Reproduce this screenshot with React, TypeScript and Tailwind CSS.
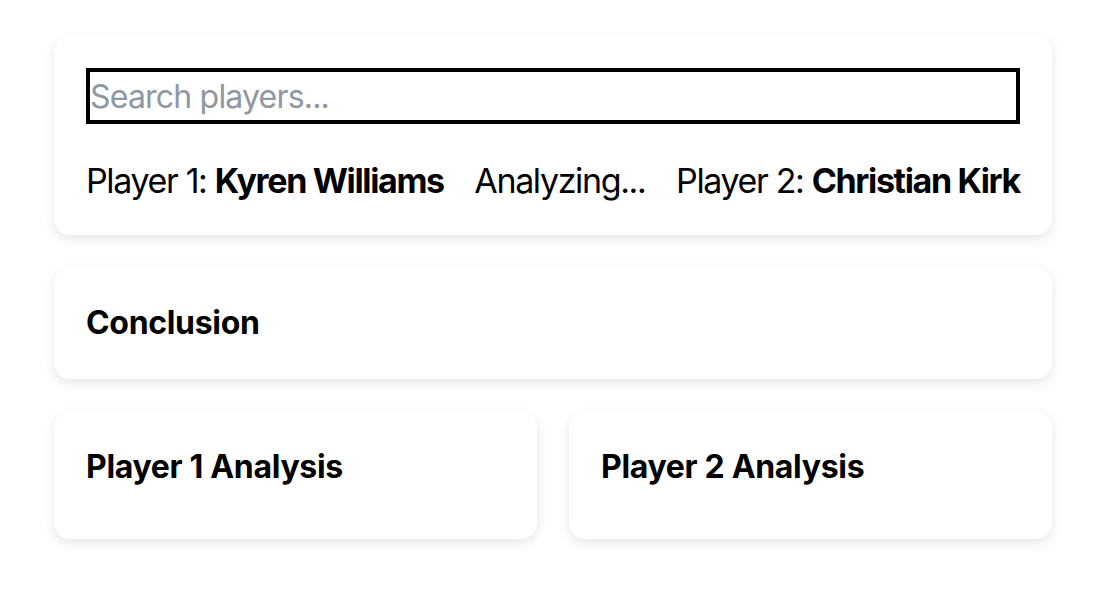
import React from 'react';

const App: React.FC = () => {
  return (
    <div className="min-h-screen bg-white pl-[54px] pr-[60px] pt-[36px] font-['Inter',sans-serif] text-black">
      <div className="flex flex-col gap-[32px]">
        <div className="rounded-[16px] bg-white px-[32px] pt-[32px] pb-[26px] shadow-[0_4px_12px_rgba(0,0,0,0.10)]">
          <input
            type="text"
            placeholder="Search players..."
            className="block h-[56px] w-full border-[4px] border-black px-0 text-[32px] leading-[48px] tracking-[-0.025em] placeholder:text-[#8f97a3] outline-none"
          />
          <div className="mt-[29px] flex items-center justify-between text-[34px] leading-[56px] tracking-[-0.04em]">
            <span>
              Player 1: <span className="font-bold">Kyren Williams</span>
            </span>
            <span>Analyzing...</span>
            <span>
              Player 2: <span className="font-bold">Christian Kirk</span>
            </span>
          </div>
        </div>

        <div className="rounded-[16px] bg-white p-[32px] shadow-[0_4px_12px_rgba(0,0,0,0.10)]">
          <h3 className="text-[32px] font-bold leading-[48px] tracking-[-0.01em]">Conclusion</h3>
        </div>

        <div className="grid grid-cols-2 gap-[32px]">
          <div className="rounded-[16px] bg-white p-[32px] shadow-[0_4px_12px_rgba(0,0,0,0.10)]">
            <h3 className="mb-[16px] text-[32px] font-bold leading-[48px] tracking-[-0.01em]">Player 1 Analysis</h3>
          </div>
          <div className="rounded-[16px] bg-white p-[32px] shadow-[0_4px_12px_rgba(0,0,0,0.10)]">
            <h3 className="mb-[16px] text-[32px] font-bold leading-[48px] tracking-[-0.01em]">Player 2 Analysis</h3>
          </div>
        </div>
      </div>
    </div>
  );
};

export default App;
